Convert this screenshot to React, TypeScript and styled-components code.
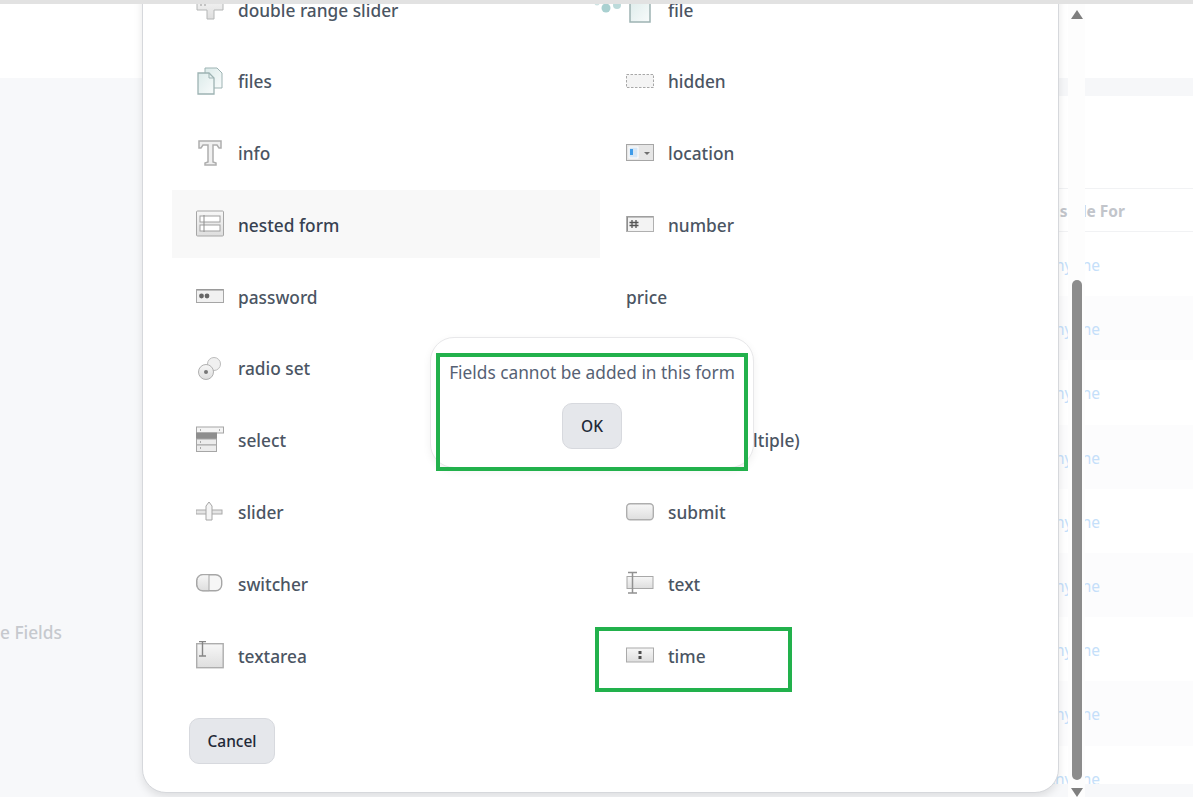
import React from "react"
import styled, { createGlobalStyle } from "styled-components"

const GlobalStyle = createGlobalStyle`
    html, body {
        margin: 0;
        height: 100%;
        overflow: hidden;
        background: #fff;
    }
    * {
        box-sizing: border-box;
    }
`

const Page = styled.div`
    position: relative;
    width: 1193px;
    height: 797px;
    overflow: hidden;
    display: flex;
    flex-direction: column;
    font-family: "Noto Sans", "Open Sans", sans-serif;
`
const TopLine = styled.div`
    position: relative;
    z-index: 5;
    height: 4px;
    flex: none;
    background: #e2e2e2;
`
const Header = styled.div`
    height: 74px;
    flex: none;
    background: #fff;
`
const Body = styled.div`
    flex: 1;
    display: flex;
    min-height: 0;
`
const Sidebar = styled.div`
    flex: 1;
    padding-top: 544px;
    background: #f7f8fa;
`
const SidebarLabel = styled.div`
    font-size: 17.3px;
    line-height: 22px;
    font-weight: 500;
    color: #c6c9ce;
`
const Main = styled.div`
    width: 293px;
    display: flex;
    flex-direction: column;
    background: #fff;
`
const MainBand = styled.div`
    height: 18px;
    flex: none;
    background: #f6f7f9;
`
const TableHead = styled.div`
    margin-top: 92px;
    height: 44px;
    padding: 2px 0 0 145px;
    display: flex;
    align-items: center;
    border-top: 1px solid #f1f2f4;
    border-bottom: 1px solid #f1f2f4;
    font-size: 15.5px;
    font-weight: 700;
    color: #c2c5cb;
`
const TableRows = styled.div`
    height: 552px;
    flex: none;
    overflow: hidden;
`
const TableRow = styled.div<{ $shaded: boolean }>`
    height: 64.2px;
    padding: 2px 0 0 145px;
    display: flex;
    align-items: center;
    font-size: 15.5px;
    color: #c5dffa;
    background: ${({ $shaded }) => ($shaded ? "#fcfcfd" : "#fff")};
`
const MainFoot = styled.div`
    flex: 1;
    background: #f7f8fa;
`

const Modal = styled.div`
    position: absolute;
    z-index: 2;
    left: 142px;
    top: -41px;
    width: 917px;
    padding: 15px 29px 28px 29px;
    display: flex;
    flex-direction: column;
    align-items: flex-start;
    background: #fff;
    border: 1px solid #d6d8dc;
    border-radius: 24px;
    box-shadow: 0 4px 8px rgba(0, 0, 0, 0.1);
`
const FieldGrid = styled.div`
    display: grid;
    grid-template-columns: 428px 428px;
    column-gap: 2px;
    row-gap: 3.8px;
`
const FieldRow = styled.div<{ $active?: boolean }>`
    height: 68px;
    padding-left: 24px;
    display: flex;
    align-items: center;
    gap: 14px;
    font-size: 17.3px;
    font-weight: 500;
    color: ${({ $active }) => ($active ? "#374151" : "#4b5563")};
    background: ${({ $active }) => ($active ? "#f8f8f8" : "transparent")};
`
const FieldLabel = styled.span`
    padding-top: 2px;
`
const FieldIcon = styled.svg`
    width: 28px;
    height: 28px;
    flex: none;
`
const GreyButton = styled.button`
    height: 46px;
    border: 1px solid #d7d9de;
    border-radius: 10px;
    background: #e5e7eb;
    font-family: inherit;
    font-size: 15.5px;
    font-weight: 500;
    color: #1f2937;
`
const CancelButton = styled(GreyButton)`
    width: 86px;
    margin: 29px 0 0 17px;
`

const Dots = styled.svg`
    position: absolute;
    z-index: 3;
    left: 592px;
    top: 0;
    width: 32px;
    height: 14px;
`
const Defs = styled.svg`
    position: absolute;
    width: 0;
    height: 0;
`

const Dialog = styled.div`
    position: absolute;
    z-index: 3;
    left: 430px;
    top: 337px;
    width: 324px;
    height: 131px;
    padding-top: 23px;
    display: flex;
    flex-direction: column;
    align-items: center;
    background: #fff;
    border: 1px solid #e8e8ea;
    border-radius: 24px;
    box-shadow: 0 3px 8px rgba(0, 0, 0, 0.06);
`
const DialogText = styled.div`
    font-size: 17.3px;
    line-height: 24px;
    color: #566174;
    white-space: nowrap;
`
const OkButton = styled(GreyButton)`
    width: 60px;
    margin-top: 18px;
`

const Marker = styled.div<{ $x: number; $y: number; $w: number; $h: number }>`
    position: absolute;
    z-index: 4;
    left: ${({ $x }) => $x}px;
    top: ${({ $y }) => $y}px;
    width: ${({ $w }) => $w}px;
    height: ${({ $h }) => $h}px;
    border: 4px solid #22b14c;
`

const ScrollTrack = styled.div`
    position: absolute;
    z-index: 2;
    left: 1068px;
    top: 4px;
    bottom: 0;
    width: 17px;
    background: #fdfdfd;
`
const ScrollThumb = styled.div`
    position: absolute;
    left: 4px;
    top: 276px;
    width: 10px;
    height: 500px;
    border-radius: 5px;
    background: #8c8c8c;
`
const ScrollArrow = styled.div<{ $down?: boolean }>`
    position: absolute;
    left: 3px;
    ${({ $down }) => ($down ? "bottom: 0;" : "top: 6px;")}
    width: 0;
    height: 0;
    border-left: 6px solid transparent;
    border-right: 6px solid transparent;
    ${({ $down }) => ($down ? "border-top: 9px solid #7f7f7f;" : "border-bottom: 9px solid #7f7f7f;")}
`

const line = "#b4b6b6"
const grey = "url(#iconGrey)"
const teal = "url(#iconTeal)"

const icons: Record<string, React.ReactNode> = {
    range: (
        <>
            <path d="M1 1h26v14H18v9h-7v-9H1z" fill={grey} stroke={line} />
            <path d="M5 5v6M9 5v6M19 5l2 3 2-3" stroke="#999" fill="none" />
        </>
    ),
    file: (
        <path d="M4 2h20v25H4z" fill={teal} stroke="#9db3b3" strokeWidth="1.5" />
    ),
    files: (
        <>
            <path d="M9 1h12l5 5v15H9z" fill={teal} stroke="#9db3b3" />
            <path d="M2 6h11l5 5v16H2z" fill={teal} stroke="#9db3b3" strokeWidth="1.3" />
            <path d="M13 6v5h5" fill="none" stroke="#9db3b3" />
        </>
    ),
    hidden: (
        <rect x="0.5" y="7.5" width="27" height="13" fill="#f4f4f4" stroke="#a8a8a8" strokeDasharray="2.5 1.5" />
    ),
    info: (
        <path d="M3 2h22v7h-2l-2-3h-4v17l3 1v2H9v-2l3-1V6H7L5 9H3z" fill="#f0f0f0" stroke="#aeaeae" strokeWidth="1.5" />
    ),
    location: (
        <>
            <rect x="0.5" y="5.5" width="27" height="16" fill="#e6e6e6" stroke="#a6a6a6" />
            <rect x="3" y="8" width="9" height="11" fill="#d6e6f5" stroke="#fff" />
            <rect x="4" y="10" width="3" height="6" fill="#3d9be9" />
            <path d="M18 13h6l-3 3z" fill="#6f6f6f" />
        </>
    ),
    nested: (
        <>
            <rect x="0.5" y="1" width="27" height="25" rx="1" fill={grey} stroke="#a6a6a6" />
            <rect x="4" y="6" width="20" height="6" fill="#fff" stroke="#a0a0a0" />
            <rect x="4" y="15" width="20" height="6" fill="#fff" stroke="#a0a0a0" />
            <path d="M8 5v17" stroke="#8f8f8f" />
        </>
    ),
    number: (
        <>
            <rect x="0.5" y="6.5" width="27" height="15" fill="#f3f3f3" stroke="#b0b0b0" />
            <path d="M1 7h26M1.500 7v14" stroke="#8f8f8f" />
            <path d="M6 10v8M10 10v8M3.500 12.500h9M3.500 15.500h9" stroke="#555" strokeWidth="1.300" />
        </>
    ),
    password: (
        <>
            <rect x="0.5" y="7.500" width="27" height="13" fill="#f1f1f1" stroke="#a6a6a6" />
            <path d="M1 8h26" stroke="#8f8f8f" />
            <circle cx="5.500" cy="14" r="2.400" fill="#666" />
            <circle cx="11" cy="14" r="2.400" fill="#666" />
        </>
    ),
    radio: (
        <>
            <circle cx="18" cy="10" r="6.500" fill="#f0f0f0" stroke="#bcbcbc" />
            <circle cx="10" cy="18" r="7.500" fill={grey} stroke="#b0b0b0" />
            <circle cx="10" cy="18" r="2" fill="#777" />
        </>
    ),
    select: (
        <>
            <rect x="0.5" y="1" width="27" height="6" fill="#f4f4f4" stroke="#a6a6a6" />
            <rect x="0.5" y="7" width="20" height="6" fill="#8e8e8e" stroke="#8e8e8e" />
            <rect x="0.5" y="13" width="20" height="6" fill="#ececec" stroke="#a6a6a6" />
            <rect x="0.5" y="19" width="20" height="6.500" fill="#ececec" stroke="#a6a6a6" />
            <path d="M4 4h1M23 4h1M4 16h1M4 22h1" stroke="#666" />
        </>
    ),
    slider: (
        <>
            <rect x="0" y="12" width="26" height="4" fill="#e4e4e4" stroke="#aaa" />
            <path d="M10 8l3-4 3 4v14h-6z" fill="#f4f4f4" stroke="#a6a6a6" />
        </>
    ),
    submit: (
        <rect x="0.700" y="5.700" width="26.600" height="16" rx="3.500" fill={grey} stroke="#aeaeae" strokeWidth="1.400" />
    ),
    switcher: (
        <>
            <rect x="0.700" y="5.700" width="25" height="16" rx="6" fill="#f6f6f6" stroke="#a6a6a6" strokeWidth="1.400" />
            <path d="M13 5.700H7a6 6 0 0 0-6 6v4a6 6 0 0 0 6 6h6z" fill={grey} stroke="#a6a6a6" />
        </>
    ),
    text: (
        <>
            <rect x="1" y="7.500" width="26" height="12" fill={grey} stroke="#a8a8a8" />
            <path d="M2 3.500h9M6.500 3.500v20M2 24h9" stroke="#919191" strokeWidth="1.500" fill="none" />
        </>
    ),
    textarea: (
        <>
            <rect x="0.700" y="2.700" width="26.500" height="24" fill={grey} stroke="#adadad" strokeWidth="1.400" />
            <path d="M3 0.500h7M6.500 0.500v14M3 15h7" stroke="#858585" strokeWidth="1.400" fill="none" />
        </>
    ),
    time: (
        <>
            <rect x="0.500" y="7" width="27" height="14" fill={grey} stroke="#aaa" />
            <rect x="12.500" y="10" width="3" height="3" fill="#4d4d4d" />
            <rect x="12.500" y="15" width="3" height="3" fill="#4d4d4d" />
        </>
    ),
}

type Field = { label: string; icon?: string; active?: boolean }

const fields: Field[] = [
    { label: "double range slider", icon: "range" },
    { label: "file", icon: "file" },
    { label: "files", icon: "files" },
    { label: "hidden", icon: "hidden" },
    { label: "info", icon: "info" },
    { label: "location", icon: "location" },
    { label: "nested form", icon: "nested", active: true },
    { label: "number", icon: "number" },
    { label: "password", icon: "password" },
    { label: "price" },
    { label: "radio set", icon: "radio" },
    { label: "range", icon: "slider" },
    { label: "select", icon: "select" },
    { label: "select (multiple)", icon: "select" },
    { label: "slider", icon: "slider" },
    { label: "submit", icon: "submit" },
    { label: "switcher", icon: "switcher" },
    { label: "text", icon: "text" },
    { label: "textarea", icon: "textarea" },
    { label: "time", icon: "time" },
]

const App: React.FC = () => {
    return (
        <Page>
            <GlobalStyle />
            <Defs>
                <defs>
                    <linearGradient id="iconGrey" x1="0" y1="0" x2="0" y2="1">
                        <stop offset="0" stopColor="#f7f7f7" />
                        <stop offset="1" stopColor="#dedede" />
                    </linearGradient>
                    <linearGradient id="iconTeal" x1="0" y1="0" x2="1" y2="1">
                        <stop offset="0" stopColor="#dcebea" />
                        <stop offset="1" stopColor="#f8fbfb" />
                    </linearGradient>
                </defs>
            </Defs>
            <TopLine />
            <Header />
            <Body>
                <Sidebar>
                    <SidebarLabel>e Fields</SidebarLabel>
                </Sidebar>
                <Main>
                    <MainBand />
                    <TableHead>Visible For</TableHead>
                    <TableRows>
                        {Array.from({ length: 9 }, (_, i) => (
                            <TableRow key={i} $shaded={i % 2 === 1}>Anyone</TableRow>
                        ))}
                    </TableRows>
                    <MainFoot />
                </Main>
            </Body>

            <Modal>
                <FieldGrid>
                    {fields.map((field) => (
                        <FieldRow key={field.label} $active={field.active}>
                            {field.icon && <FieldIcon viewBox="0 0 28 28">{icons[field.icon]}</FieldIcon>}
                            <FieldLabel>{field.label}</FieldLabel>
                        </FieldRow>
                    ))}
                </FieldGrid>
                <CancelButton>Cancel</CancelButton>
            </Modal>

            <Dots viewBox="0 0 32 14">
                <circle cx="5" cy="3" r="2.500" fill="#cfe3e3" />
                <circle cx="14" cy="8" r="4.500" fill="#a9d0d0" />
                <circle cx="25" cy="5" r="4" fill="#bcdada" />
            </Dots>

            <Dialog>
                <DialogText>Fields cannot be added in this form</DialogText>
                <OkButton>OK</OkButton>
            </Dialog>
            <Marker $x={436} $y={353} $w={312} $h={118} />
            <Marker $x={595} $y={627} $w={197} $h={65} />

            <ScrollTrack>
                <ScrollArrow />
                <ScrollThumb />
                <ScrollArrow $down />
            </ScrollTrack>
        </Page>
    )
}

export default App
